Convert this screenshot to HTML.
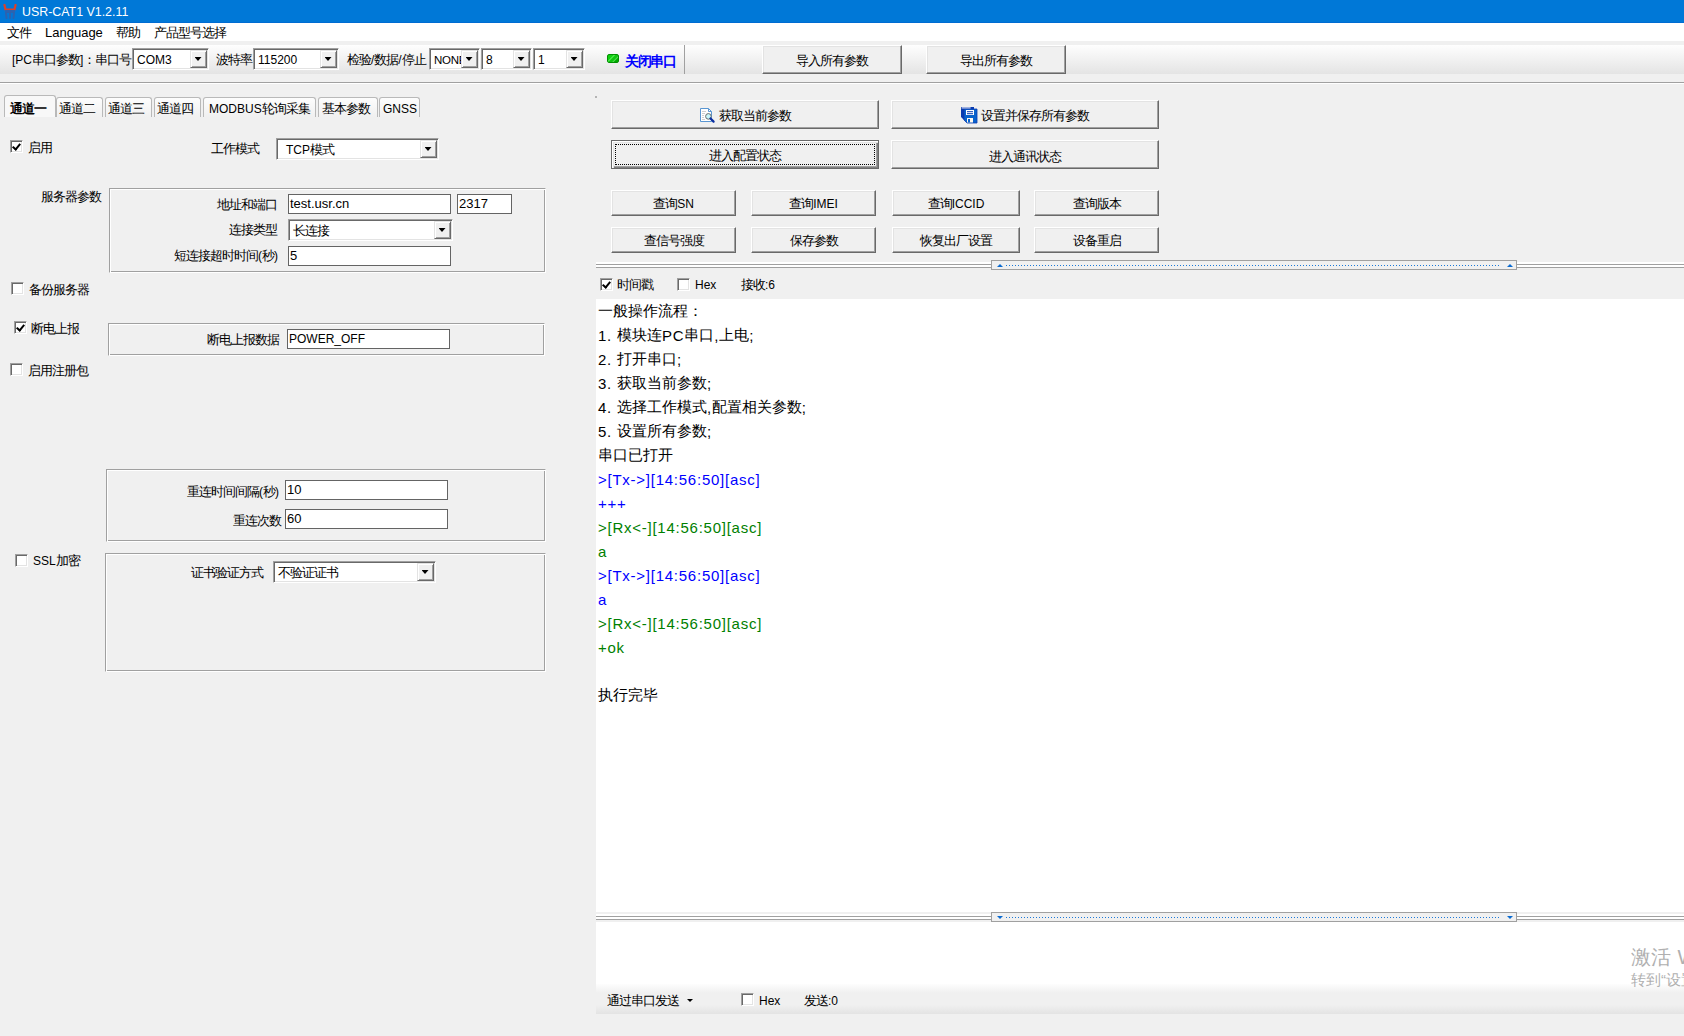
<!DOCTYPE html>
<html><head><meta charset="utf-8">
<style>
*{margin:0;padding:0;box-sizing:border-box}
html,body{width:1684px;height:1036px;overflow:hidden;background:#f0f0f0;font-family:"Liberation Sans",sans-serif;font-size:13px;letter-spacing:-1px;color:#000}
.l{font-size:12px;letter-spacing:0}
#log i{font-style:normal;font-size:15px;letter-spacing:0.75px;position:relative;top:1px}
.a{position:absolute;white-space:nowrap}
.t{position:absolute;white-space:nowrap;line-height:16px}
.btn{position:absolute;background:#f0f0f0;border-top:1px solid #fff;border-left:1px solid #fff;border-right:1px solid #696969;border-bottom:1px solid #696969;box-shadow:inset -1px -1px 0 #a0a0a0,inset 1px 1px 0 #e3e3e3;text-align:center;white-space:nowrap}
.combo{position:absolute;background:#fff;border-top:1px solid #a0a0a0;border-left:1px solid #a0a0a0;border-right:1px solid #fff;border-bottom:1px solid #fff;box-shadow:inset 1px 1px 0 #696969,inset -1px -1px 0 #e3e3e3;white-space:nowrap}
.combo .v{position:absolute;left:4px;top:3px;line-height:16px}
.combo .dd{position:absolute;right:1px;top:1px;bottom:1px;width:17px;background:#f0f0f0;border-top:1px solid #e3e3e3;border-left:1px solid #e3e3e3;border-right:1px solid #696969;border-bottom:1px solid #696969;box-shadow:inset 1px 1px 0 #fff,inset -1px -1px 0 #a0a0a0}
.combo .dd:after{content:"";position:absolute;left:50%;top:50%;margin-left:-4px;margin-top:-2px;width:7px;height:4px;background:#000;clip-path:polygon(0 0,100% 0,50% 100%)}
.inp{position:absolute;background:#fff;border:1px solid #646464;white-space:nowrap}
.inp .v{position:absolute;left:1px;top:1px;line-height:16px}
.chk{position:absolute;width:13px;height:13px;background:#fff;border-top:1px solid #a0a0a0;border-left:1px solid #a0a0a0;border-right:1px solid #fff;border-bottom:1px solid #fff;box-shadow:inset 1px 1px 0 #696969,inset -1px -1px 0 #e3e3e3}
.chk.on:after{content:"";position:absolute;left:3px;top:1px;width:3px;height:6px;border-right:2px solid #000;border-bottom:2px solid #000;transform:rotate(40deg)}
.grp{position:absolute;border-top:1px solid #a0a0a0;border-left:1px solid #a0a0a0;border-right:1px solid #fff;border-bottom:1px solid #fff;box-shadow:inset 1px 1px 0 #fff,inset -1px -1px 0 #a0a0a0}
.tab{position:absolute;top:97px;height:20px;border:1px solid #b9b9b9;border-bottom:none;border-radius:3px 3px 0 0;background:linear-gradient(#fdfdfd,#f0f0f0);text-align:left;line-height:22px;white-space:nowrap}
</style></head><body>

<!-- title bar -->
<div class="a" style="left:0;top:0;width:1684px;height:23px;background:#0078d7"></div>
<div class="a" style="left:0;top:22px;width:1684px;height:1px;background:#006cd2"></div>
<svg class="a" style="left:3px;top:4px" width="14" height="16" viewBox="0 0 14 16">
<path d="M1.5 1 L2.5 5.5 L11.5 5.5 L12.5 1" fill="none" stroke="#d9412a" stroke-width="2.2" stroke-linecap="round"/>
<rect x="2" y="6" width="10" height="3" fill="#2b63b0"/>
<path d="M3 9 L3.5 14 M7 9 L7 14 M11 9 L10.5 14" stroke="#2b63b0" stroke-width="2" stroke-linecap="round"/>
</svg>
<div class="t" style="left:22px;top:4px;color:#fff"><span class="l" style="font-size:12.4px">USR-CAT1 V1.2.11</span></div>

<!-- menu bar -->
<div class="a" style="left:0;top:23px;width:1684px;height:18px;background:#fff"></div>
<div class="t" style="left:7px;top:25px">文件</div>
<div class="t" style="left:45px;top:25px"><span class="l" style="font-size:13px">Language</span></div>
<div class="t" style="left:116px;top:25px">帮助</div>
<div class="t" style="left:154px;top:25px">产品型号选择</div>

<!-- toolbar -->
<div class="a" style="left:0;top:45px;width:1684px;height:29px;background:linear-gradient(#fefefe,#e4e4e4)"></div>
<div class="a" style="left:0;top:82px;width:1684px;height:1px;background:#a0a0a0"></div>
<div class="a" style="left:0;top:83px;width:1684px;height:1px;background:#fff"></div>


<!-- toolbar contents -->
<div class="t" style="left:12px;top:52px"><span class="l">[PC</span>串口参数<span class="l">]</span>：串口号</div>
<div class="combo" style="left:132px;top:48px;width:77px;height:22px"><span class="v"><span class="l">COM3</span></span><div class="dd"></div></div>
<div class="t" style="left:216px;top:52px">波特率</div>
<div class="combo" style="left:253px;top:48px;width:86px;height:22px"><span class="v"><span class="l">115200</span></span><div class="dd"></div></div>
<div class="t" style="left:347px;top:52px">检验<span class="l">/</span>数据<span class="l">/</span>停止</div>
<div class="combo" style="left:429px;top:48px;width:51px;height:22px;overflow:hidden"><span class="v"><span class="l" style="font-size:11.5px;letter-spacing:-0.3px">NONE</span></span><div class="dd"></div></div>
<div class="combo" style="left:481px;top:48px;width:51px;height:22px"><span class="v"><span class="l">8</span></span><div class="dd"></div></div>
<div class="combo" style="left:533px;top:48px;width:52px;height:22px"><span class="v"><span class="l">1</span></span><div class="dd"></div></div>
<div class="a" style="left:607px;top:54px;width:12px;height:9px;border-radius:2px;background:linear-gradient(135deg,#10d010 0,#10d010 30%,#60f060 38%,#10c810 46%,#10c010 62%,#50e050 70%,#00a800 78%);border:1px solid #009000"></div>
<div class="t" style="left:625px;top:53px;color:#0000ff;font-weight:bold;font-size:14px;letter-spacing:-1.4px">关闭串口</div>
<div class="a" style="left:684px;top:45px;width:1px;height:29px;background:#a0a0a0"></div>
<div class="btn" style="left:762px;top:45px;width:140px;height:29px;line-height:29px">导入所有参数</div>
<div class="btn" style="left:926px;top:45px;width:140px;height:29px;line-height:29px">导出所有参数</div>

<!-- tabs -->
<div class="tab" style="left:4px;top:95px;height:22px;width:52px;font-weight:bold;line-height:25px;padding-left:5px;background:#f8f8f8">通道一</div>
<div class="tab" style="left:56px;width:47px;padding-left:2px">通道二</div>
<div class="tab" style="left:105px;width:47px;padding-left:2px">通道三</div>
<div class="tab" style="left:154px;width:47px;padding-left:2px">通道四</div>
<div class="tab" style="left:203px;width:113px;padding-left:5px"><span class="l">MODBUS</span>轮询采集</div>
<div class="tab" style="left:318px;width:60px;padding-left:3px">基本参数</div>
<div class="tab" style="left:379px;width:41px;padding-left:3px"><span class="l">GNSS</span></div>

<!-- left panel -->
<div class="chk on" style="left:10px;top:140px"></div>
<div class="t" style="left:28px;top:140px">启用</div>
<div class="t" style="left:211px;top:141px">工作模式</div>
<div class="combo" style="left:276px;top:138px;width:163px;height:22px"><span class="v" style="left:9px"><span class="l">TCP</span>模式</span><div class="dd"></div></div>

<div class="t" style="left:41px;top:189px">服务器参数</div>
<div class="grp" style="left:109px;top:188px;width:437px;height:85px"></div>
<div class="t" style="left:217px;top:197px">地址和端口</div>
<div class="inp" style="left:288px;top:194px;width:163px;height:20px"><span class="v"><span class="l" style="font-size:13px">test.usr.cn</span></span></div>
<div class="inp" style="left:457px;top:194px;width:55px;height:20px"><span class="v"><span class="l" style="font-size:13px">2317</span></span></div>
<div class="t" style="left:229px;top:222px">连接类型</div>
<div class="combo" style="left:288px;top:219px;width:165px;height:22px"><span class="v">长连接</span><div class="dd"></div></div>
<div class="t" style="left:174px;top:248px">短连接超时时间<span class="l">(</span>秒<span class="l">)</span></div>
<div class="inp" style="left:288px;top:246px;width:163px;height:20px"><span class="v"><span class="l" style="font-size:13px">5</span></span></div>

<div class="chk" style="left:11px;top:282px"></div>
<div class="t" style="left:29px;top:282px">备份服务器</div>

<div class="chk on" style="left:14px;top:321px"></div>
<div class="t" style="left:31px;top:321px">断电上报</div>
<div class="grp" style="left:108px;top:323px;width:437px;height:33px"></div>
<div class="t" style="left:207px;top:332px">断电上报数据</div>
<div class="inp" style="left:287px;top:329px;width:163px;height:20px"><span class="v"><span class="l">POWER_OFF</span></span></div>

<div class="chk" style="left:10px;top:363px"></div>
<div class="t" style="left:28px;top:363px">启用注册包</div>

<div class="grp" style="left:106px;top:469px;width:440px;height:73px"></div>
<div class="t" style="left:187px;top:484px">重连时间间隔<span class="l">(</span>秒<span class="l">)</span></div>
<div class="inp" style="left:285px;top:480px;width:163px;height:20px"><span class="v"><span class="l" style="font-size:13px">10</span></span></div>
<div class="t" style="left:233px;top:513px">重连次数</div>
<div class="inp" style="left:285px;top:509px;width:163px;height:20px"><span class="v"><span class="l" style="font-size:13px">60</span></span></div>

<div class="chk" style="left:15px;top:554px"></div>
<div class="t" style="left:33px;top:553px"><span class="l">SSL</span>加密</div>
<div class="grp" style="left:105px;top:553px;width:441px;height:119px"></div>
<div class="t" style="left:191px;top:565px">证书验证方式</div>
<div class="combo" style="left:273px;top:561px;width:163px;height:22px"><span class="v">不验证证书</span><div class="dd"></div></div>

<!-- right panel -->
<div class="a" style="left:595px;top:96px;width:2px;height:2px;background:#b4b4b4"></div>
<div class="btn" style="left:611px;top:100px;width:268px;height:29px;line-height:29px"><span style="display:inline-block;width:19px"></span>获取当前参数</div>
<div class="btn" style="left:891px;top:100px;width:268px;height:29px;line-height:29px"><span style="display:inline-block;width:19px"></span>设置并保存所有参数</div>
<div class="btn" style="left:611px;top:140px;width:268px;height:29px;line-height:30px;border:1px solid #696969;box-shadow:inset 1px 1px 0 #fff,inset 2px 2px 0 #e3e3e3,inset -1px -1px 0 #808080,inset -2px -2px 0 #a0a0a0">进入配置状态<div class="a" style="left:3px;top:3px;right:3px;bottom:3px;border:1px dotted #000"></div></div>
<div class="btn" style="left:891px;top:140px;width:268px;height:29px;line-height:31px">进入通讯状态</div>

<div class="btn" style="left:611px;top:190px;width:125px;height:26px;line-height:26px">查询<span class="l">SN</span></div>
<div class="btn" style="left:751px;top:190px;width:125px;height:26px;line-height:26px">查询<span class="l">IMEI</span></div>
<div class="btn" style="left:892px;top:190px;width:128px;height:26px;line-height:26px">查询<span class="l">ICCID</span></div>
<div class="btn" style="left:1034px;top:190px;width:125px;height:26px;line-height:26px">查询版本</div>
<div class="btn" style="left:611px;top:227px;width:125px;height:26px;line-height:26px">查信号强度</div>
<div class="btn" style="left:751px;top:227px;width:125px;height:26px;line-height:26px">保存参数</div>
<div class="btn" style="left:892px;top:227px;width:128px;height:26px;line-height:26px">恢复出厂设置</div>
<div class="btn" style="left:1034px;top:227px;width:125px;height:26px;line-height:26px">设备重启</div>


<svg class="a" style="left:699px;top:107px" width="17" height="17" viewBox="0 0 17 17">
<path d="M1.5 1.5 H9.5 L12.5 4.5 V14.5 H1.5 Z" fill="#fff" stroke="#5a96d2" stroke-width="1"/>
<path d="M9.5 1.5 V4.5 H12.5" fill="none" stroke="#5a96d2" stroke-width="1"/>
<rect x="3" y="4" width="4" height="1" fill="#d0d0d0"/><rect x="3" y="6" width="3" height="1" fill="#d0d0d0"/><rect x="3" y="8" width="2" height="1" fill="#d0d0d0"/><rect x="3" y="10" width="2" height="1" fill="#d0d0d0"/><rect x="3" y="12" width="3" height="1" fill="#d0d0d0"/>
<circle cx="9.4" cy="9.4" r="2.8" fill="#c8f6fa" stroke="#6a6a6a" stroke-width="1"/>
<path d="M11.5 11.5 L14.6 14.6" stroke="#0a2ea0" stroke-width="2.2" stroke-linecap="round"/>
</svg>
<svg class="a" style="left:960px;top:106px" width="18" height="18" viewBox="0 0 18 18">
<path d="M1 1 H14 V14 H4 L1 11 Z" fill="#0b3bb0"/>
<path d="M4 3 H17 V17 H7 L4 14 Z" fill="#0a62cc" stroke="#0b3bb0" stroke-width="0.8"/>
<rect x="1.6" y="1.4" width="9" height="1" fill="#fff"/>
<rect x="6" y="4" width="8" height="5" fill="#fff"/>
<rect x="7" y="5.2" width="6" height="1" fill="#0b3bb0"/>
<rect x="7" y="7.2" width="6" height="1" fill="#0b3bb0"/>
<rect x="7" y="12" width="6" height="4.5" fill="#fff8ee"/>
<rect x="8" y="13" width="2" height="3.5" fill="#0a62cc"/>
</svg>
<!-- upper splitter -->
<div class="a" style="left:596px;top:262px;width:1088px;height:5px;background:#fff"></div>
<div class="a" style="left:596px;top:264px;width:1088px;height:1px;background:#a0a0a0"></div>
<div class="a" style="left:596px;top:267px;width:1088px;height:1px;background:#a0a0a0"></div>
<div class="a" style="left:991px;top:260px;width:526px;height:10px;background:#f0f0f0;border:1px solid #a0a0a0"></div>
<div class="a" style="left:997px;top:264px;width:0;height:0;border-left:3px solid transparent;border-right:3px solid transparent;border-bottom:3px solid #0a6ad0"></div>
<div class="a" style="left:1507px;top:264px;width:0;height:0;border-left:3px solid transparent;border-right:3px solid transparent;border-bottom:3px solid #0a6ad0"></div>
<div class="a" style="left:1006px;top:265px;width:494px;height:1px;background:repeating-linear-gradient(90deg,#1a78d8 0,#1a78d8 1px,transparent 1px,transparent 3px)"></div>

<!-- recv option bar -->
<div class="chk on" style="left:600px;top:278px"></div>
<div class="t" style="left:617px;top:277px">时间戳</div>
<div class="chk" style="left:677px;top:278px"></div>
<div class="t" style="left:695px;top:277px"><span class="l">Hex</span></div>
<div class="t" style="left:741px;top:277px">接收<span class="l">:6</span></div>

<!-- recv text area -->
<div class="a" style="left:596px;top:299px;width:1088px;height:613px;background:#fff"></div>
<div class="a" id="log" style="left:598px;top:299px;font-size:15px;line-height:24px;letter-spacing:0;white-space:pre">一般操作流程：
<i>1. </i>模块连<i>PC</i>串口<i>,</i>上电<i>;</i>
<i>2. </i>打开串口<i>;</i>
<i>3. </i>获取当前参数<i>;</i>
<i>4. </i>选择工作模式<i>,</i>配置相关参数<i>;</i>
<i>5. </i>设置所有参数<i>;</i>
串口已打开
<i style="color:#0000ff">&gt;[Tx-&gt;][14:56:50][asc]
+++</i>
<i style="color:#008000">&gt;[Rx&lt;-][14:56:50][asc]
a</i>
<i style="color:#0000ff">&gt;[Tx-&gt;][14:56:50][asc]
a</i>
<i style="color:#008000">&gt;[Rx&lt;-][14:56:50][asc]
+ok</i>

执行完毕</div>

<!-- lower splitter -->
<div class="a" style="left:596px;top:912px;width:1088px;height:10px;background:#f0f0f0"></div>
<div class="a" style="left:596px;top:914px;width:1088px;height:5px;background:#fff"></div>
<div class="a" style="left:596px;top:916px;width:1088px;height:1px;background:#a0a0a0"></div>
<div class="a" style="left:596px;top:919px;width:1088px;height:1px;background:#a0a0a0"></div>
<div class="a" style="left:991px;top:912px;width:526px;height:10px;background:#f0f0f0;border:1px solid #a0a0a0"></div>
<div class="a" style="left:997px;top:916px;width:0;height:0;border-left:3px solid transparent;border-right:3px solid transparent;border-top:3px solid #0a6ad0"></div>
<div class="a" style="left:1507px;top:916px;width:0;height:0;border-left:3px solid transparent;border-right:3px solid transparent;border-top:3px solid #0a6ad0"></div>
<div class="a" style="left:1006px;top:917px;width:494px;height:1px;background:repeating-linear-gradient(90deg,#1a78d8 0,#1a78d8 1px,transparent 1px,transparent 3px)"></div>

<!-- send area -->
<div class="a" style="left:596px;top:922px;width:1088px;height:62px;background:#fff"></div>
<div class="a" style="left:596px;top:984px;width:1088px;height:30px;background:linear-gradient(#fdfdfd,#f0f0f0 30%,#f0f0f0 70%,#e3e3e3)"></div>
<div class="t" style="left:607px;top:993px">通过串口发送</div>
<div class="a" style="left:687px;top:999px;width:0;height:0;border-left:3px solid transparent;border-right:3px solid transparent;border-top:3px solid #000"></div>
<div class="chk" style="left:741px;top:993px"></div>
<div class="t" style="left:759px;top:993px"><span class="l">Hex</span></div>
<div class="t" style="left:804px;top:993px">发送<span class="l">:0</span></div>

<!-- watermark -->
<div class="t" style="left:1631px;top:945px;font-size:20px;line-height:24px;color:#b0b0b0;letter-spacing:0.3px">激活 Windows</div>
<div class="t" style="left:1631px;top:971px;font-size:15px;line-height:17px;color:#b0b0b0;letter-spacing:0">转到“设置”以激活 Windows。</div>
</body></html>
